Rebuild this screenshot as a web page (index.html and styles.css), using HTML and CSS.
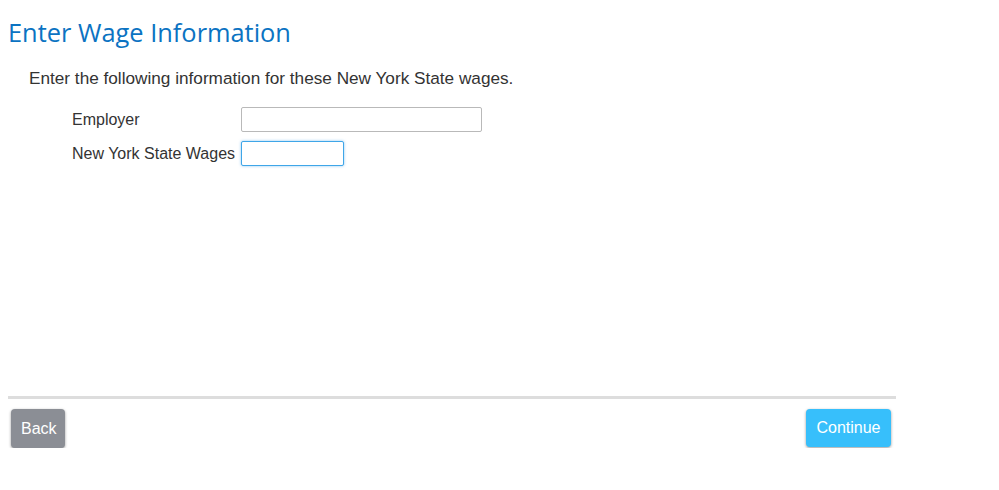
FILE: index.html
```html
<!DOCTYPE html>
<html lang="en">
<head>
<meta charset="utf-8">
<title>Enter Wage Information</title>
<link rel="stylesheet" href="styles.css">
</head>
<body>
<div class="page">
  <main class="content">
    <h1 class="title">Enter Wage Information</h1>
    <p class="intro">Enter the following information for these New York State wages.</p>
    <form class="wage-form">
      <div class="row">
        <label class="label" for="employer">Employer</label>
        <input class="field field-wide" id="employer" type="text">
      </div>
      <div class="row">
        <label class="label" for="wages">New York State Wages</label>
        <input class="field field-short field-focus" id="wages" type="text">
      </div>
    </form>
  </main>
  <footer class="footer">
    <button class="btn btn-back" type="button">Back</button>
    <button class="btn btn-continue" type="button">Continue</button>
  </footer>
</div>
</body>
</html>
```
FILE: styles.css
```css
html, body {
  margin: 0;
  padding: 0;
  background: #ffffff;
}

.page {
  width: 888px;
  padding: 0 8px;
  font-family: "Liberation Sans", Arial, sans-serif;
  color: #333333;
}

.content {
  height: 396px;
  box-sizing: border-box;
  padding-top: 16px;
}

.title {
  margin: 0;
  font-family: "Open Sans", "Liberation Sans", sans-serif;
  font-weight: 400;
  font-size: 25.4px;
  line-height: 32px;
  color: #0b73c2;
}

.intro {
  margin: 20px 0 0 21px;
  font-size: 17.2px;
  line-height: 20px;
  color: #333333;
}

.wage-form {
  margin: 19px 0 0 64px;
  display: flex;
  flex-direction: column;
  gap: 9px;
}

.row {
  display: flex;
  align-items: center;
}

.label {
  width: 169px;
  font-size: 16px;
  color: #333333;
}

.field {
  height: 25px;
  box-sizing: border-box;
  border: 1px solid #b9b9b9;
  border-radius: 2px;
  padding: 2px 4px;
  font: inherit;
  background: #ffffff;
  outline: none;
}

.field-wide {
  width: 241px;
}

.field-short {
  width: 103px;
}

.field-focus {
  border: 1px solid #3fa6e8;
  box-shadow: 0 0 3px rgba(70, 160, 230, 0.6);
}

.footer {
  border-top: 3px solid #dddddd;
  display: flex;
  justify-content: space-between;
  padding: 10px 5px 0 3px;
}

.btn {
  height: 39px;
  border: none;
  border-radius: 4px;
  color: #ffffff;
  font-family: "Liberation Sans", Arial, sans-serif;
  font-size: 16px;
  padding: 0 10px;
  box-shadow: 0 1px 3px rgba(0, 0, 0, 0.4);
  cursor: pointer;
}

.btn-back {
  width: 54px;
  background: #8b8e95;
}

.btn-continue {
  width: 85px;
  height: 38px;
  background: #37bffb;
}
```
